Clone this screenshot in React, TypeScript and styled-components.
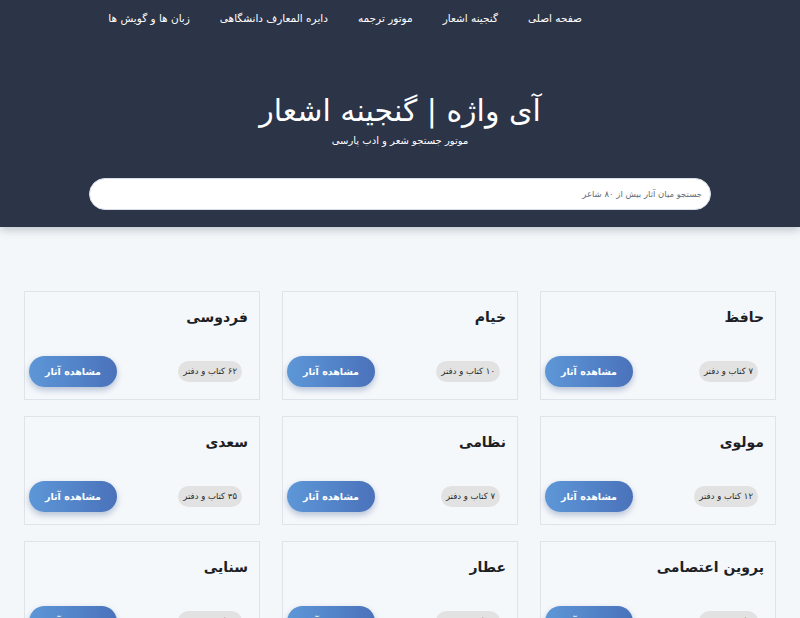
import React from 'react';
import styled, { createGlobalStyle } from 'styled-components';

const GlobalStyle = createGlobalStyle`
  html, body {
    margin: 0;
    padding: 0;
    background: #f4f7fa;
    font-family: "DejaVu Sans", "Noto Sans", sans-serif;
  }
  * { box-sizing: border-box; }
`;

const poets = [
  { name: 'حافظ', books: '۷' },
  { name: 'خیام', books: '۱۰' },
  { name: 'فردوسی', books: '۶۲' },
  { name: 'مولوی', books: '۱۲' },
  { name: 'نظامی', books: '۷' },
  { name: 'سعدی', books: '۳۵' },
  { name: 'پروین اعتصامی', books: '۵' },
  { name: 'عطار', books: '۱۲' },
  { name: 'سنایی', books: '۱۴' },
];

const menu = ['صفحه اصلی', 'گنجینه اشعار', 'موتور ترجمه', 'دایره المعارف دانشگاهی', 'زبان ها و گویش ها'];

const App = () => {
  return (
    <Page dir="rtl">
      <GlobalStyle />
      <Header>
        <Nav>
          {menu.map((item) => (
            <NavItem key={item}>{item}</NavItem>
          ))}
        </Nav>
        <Hero>
          <Title>آی واژه | گنجینه اشعار</Title>
          <Subtitle>موتور جستجو شعر و ادب پارسی</Subtitle>
        </Hero>
        <SearchBox placeholder="جستجو میان آثار بیش از ۸۰ شاعر" />
      </Header>
      <Grid>
        {poets.map((p) => (
          <Card key={p.name}>
            <PoetName>{p.name}</PoetName>
            <CardFooter>
              <Badge>{p.books} کتاب و دفتر</Badge>
              <ViewButton>مشاهده آثار</ViewButton>
            </CardFooter>
          </Card>
        ))}
      </Grid>
    </Page>
  );
};

export default App;

const Page = styled.div`
  height: 618px;
  overflow: hidden;
`;

const Header = styled.header`
  background: #2c3447;
  height: 227px;
  padding-top: 10px;
  box-shadow: 0 3px 8px rgba(40, 50, 70, 0.25);
  position: relative;
`;

const Nav = styled.nav`
  display: flex;
  gap: 30px;
  padding-right: 218px;
`;

const NavItem = styled.a`
  color: #ffffff;
  font-size: 10.5px;
  line-height: 16px;
  white-space: nowrap;
  cursor: pointer;
`;

const Hero = styled.div`
  text-align: center;
  margin-top: 66px;
  color: #ffffff;
`;

const Title = styled.h1`
  margin: 0;
  font-size: 30px;
  font-weight: normal;
  line-height: 38px;
`;

const Subtitle = styled.div`
  margin-top: 3px;
  font-size: 10px;
  line-height: 16px;
`;

const SearchBox = styled.input`
  display: block;
  margin: 29px auto 0;
  width: 622px;
  height: 32px;
  border: 1px solid #d8dde6;
  border-radius: 16px;
  background: #ffffff;
  padding: 0 8px;
  font-family: inherit;
  font-size: 8.5px;
  outline: none;
  &::placeholder {
    color: #666c75;
  }
`;

const Grid = styled.div`
  display: grid;
  grid-template-columns: repeat(3, 236px);
  column-gap: 22px;
  row-gap: 16px;
  padding: 64px 24px 0 0;
`;

const Card = styled.div`
  height: 109px;
  background: #f5f8fb;
  border: 1px solid #dfe3ea;
  padding: 14px 11px 0 4px;
  display: flex;
  flex-direction: column;
`;

const PoetName = styled.div`
  font-size: 14px;
  font-weight: bold;
  color: #1d1f24;
  line-height: 22px;
`;

const CardFooter = styled.div`
  display: flex;
  justify-content: space-between;
  align-items: center;
  margin-top: 28px;
  padding-right: 6px;
`;

const Badge = styled.span`
  background: #e2e2e2;
  border-radius: 11px;
  padding: 0 5px;
  height: 21px;
  line-height: 21px;
  font-size: 8.5px;
  color: #2b2b2b;
`;

const ViewButton = styled.button`
  width: 88px;
  height: 31px;
  border: none;
  border-radius: 16px;
  background: linear-gradient(90deg, #5d97d8 0%, #4a72ba 100%);
  color: #ffffff;
  font-family: inherit;
  font-size: 9.5px;
  font-weight: bold;
  box-shadow: 0 3px 6px rgba(60, 90, 140, 0.35);
  cursor: pointer;
`;
